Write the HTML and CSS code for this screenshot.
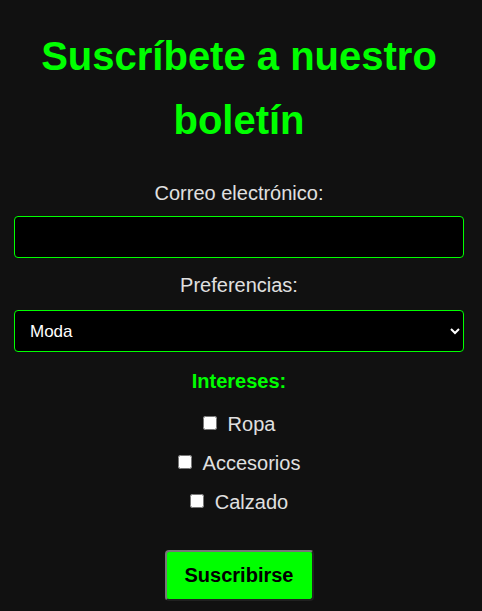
FILE: index.html
```html
<!DOCTYPE html>
<html lang="es">
<head>
<meta charset="utf-8">
<title>Boletín</title>
<link rel="stylesheet" href="styles.css">
</head>
<body>
<main class="wrap">
  <h1 class="title">Suscríbete a nuestro boletín</h1>
  <form class="form">
    <label class="label" for="email">Correo electrónico:</label>
    <input class="field" type="email" id="email">
    <label class="label label-pref" for="pref">Preferencias:</label>
    <select class="field select" id="pref">
      <option>Moda</option>
      <option>Tecnología</option>
      <option>Deportes</option>
    </select>
    <p class="subhead">Intereses:</p>
    <div class="checks">
      <label class="check"><input type="checkbox"> Ropa</label>
      <label class="check"><input type="checkbox"> Accesorios</label>
      <label class="check"><input type="checkbox"> Calzado</label>
    </div>
    <button class="btn" type="submit">Suscribirse</button>
  </form>
</main>
</body>
</html>
```

FILE: styles.css
```css
html, body {
  margin: 0;
  padding: 0;
  background: #111111;
}
body {
  font-family: "Liberation Sans", Arial, sans-serif;
  color: #e0e0e0;
}
.wrap {
  width: 450px;
  margin: 0 0 0 14px;
  padding-top: 24px;
}
.title {
  margin: 0 0 30px;
  text-align: center;
  color: #00ff00;
  font-size: 40px;
  line-height: 64px;
  font-weight: bold;
}
.form {
  display: flex;
  flex-direction: column;
  align-items: center;
}
.label {
  display: block;
  font-size: 20px;
  line-height: 23px;
  text-align: center;
  margin-bottom: 11px;
}
.label-pref {
  margin-top: 16px;
  margin-bottom: 13px;
}
.field {
  box-sizing: border-box;
  width: 450px;
  height: 42px;
  background: #000;
  border: 1px solid #00ff00;
  border-radius: 4px;
  color: #fff;
  font-family: "Liberation Sans", Arial, sans-serif;
  font-size: 17px;
  padding: 0 12px;
  outline: none;
}
.select {
  padding-left: 11px;
}
.subhead {
  margin: 18px 0 0;
  color: #00ff00;
  font-weight: bold;
  font-size: 20px;
  line-height: 23px;
}
.checks {
  display: flex;
  flex-direction: column;
  align-items: center;
  gap: 16px;
  margin-top: 20px;
}
.check {
  font-size: 20px;
  line-height: 23px;
  display: flex;
  align-items: center;
  gap: 11px;
}
.check input {
  margin: 0 0 3px;
  width: 14px;
  height: 14px;
}
.btn {
  margin-top: 36px;
  width: 149px;
  height: 51px;
  background: #00ff00;
  color: #000;
  font-family: "Liberation Sans", Arial, sans-serif;
  font-weight: bold;
  font-size: 20px;
  border: 2px outset #767676;
  border-radius: 4px;
  cursor: pointer;
}
```
